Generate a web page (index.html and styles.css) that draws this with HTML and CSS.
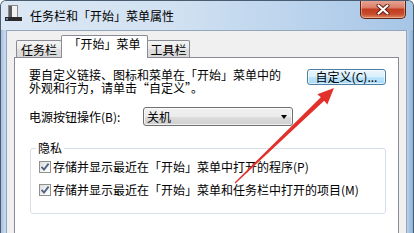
FILE: index.html
```html
<!DOCTYPE html>
<html lang="zh-CN">
<head>
<meta charset="utf-8">
<title>任务栏和「开始」菜单属性</title>
<link rel="stylesheet" href="styles.css">
</head>
<body>
<div class="window">
  <div class="titlebar">
    <svg class="appicon" width="18" height="18" viewBox="0 0 18 18">
      <rect x="3.5" y="0.5" width="9" height="12" fill="#f2f2f2" stroke="#8a8a8a"/>
      <rect x="4" y="1" width="3" height="11" fill="#5c5c5c"/>
      <rect x="0" y="12" width="17" height="4" fill="#2b2b2b"/>
      <rect x="1" y="13" width="2" height="2" fill="#4f87c8"/>
    </svg>
    <span class="title">任务栏和「开始」菜单属性</span>
    <div class="close">
      <svg width="14" height="11" viewBox="0 0 14 11">
        <path d="M2.5 1.5 L11.5 9.5 M11.5 1.5 L2.5 9.5" stroke="#5a1d12" stroke-width="4" stroke-linecap="round" fill="none"/>
        <path d="M2.5 1.5 L11.5 9.5 M11.5 1.5 L2.5 9.5" stroke="#ffffff" stroke-width="2.2" stroke-linecap="round" fill="none"/>
      </svg>
    </div>
  </div>
  <div class="client">
    <div class="tabs">
      <div class="tab t1">任务栏</div>
      <div class="tab active">「开始」菜单</div>
      <div class="tab t3">工具栏</div>
    </div>
    <div class="panel">
      <div class="intro">
        <p class="desc">要自定义链接、图标和菜单在「开始」菜单中的<br>外观和行为，请单击“自定义”。</p>
        <button class="btn">自定义(C)...</button>
      </div>
      <div class="power">
        <span class="label">电源按钮操作(B):</span>
        <div class="combo"><span class="value">关机</span><span class="drop"></span></div>
      </div>
      <fieldset class="group">
        <legend>隐私</legend>
        <label class="check"><span class="box"><svg width="10" height="10" viewBox="0 0 10 10"><path d="M1.5 4.8 L4 7.5 L8.6 1.6" stroke="#4e6286" stroke-width="1.8" fill="none"/></svg></span>存储并显示最近在「开始」菜单中打开的程序(P)</label>
        <label class="check"><span class="box"><svg width="10" height="10" viewBox="0 0 10 10"><path d="M1.5 4.8 L4 7.5 L8.6 1.6" stroke="#4e6286" stroke-width="1.8" fill="none"/></svg></span>存储并显示最近在「开始」菜单和任务栏中打开的项目(M)</label>
      </fieldset>
    </div>
  </div>
</div>
<svg class="annotation" width="414" height="233" viewBox="0 0 414 233">
  <path d="M334 88 L327.3 104.6 L324.2 100.8 L235.4 183.4 L234.6 182.6 L320.8 97.3 L317.4 94.2 Z" fill="#e2312b"/>
</svg>
</body>
</html>
```

FILE: styles.css
```css
* { box-sizing: border-box; margin: 0; padding: 0; }
html, body { width: 414px; height: 233px; overflow: hidden; }
body {
  position: relative;
  font-family: "Noto Sans CJK SC", "Noto Sans", sans-serif;
  font-size: 12px;
  line-height: 12px;
  color: #000;
  background: #fff;
}
.window {
  width: 414px;
  height: 233px;
  display: flex;
  flex-direction: column;
  border: 1px solid #4a5c70;
  border-bottom: 0;
  border-radius: 6px 6px 0 0;
  overflow: hidden;
  background: linear-gradient(to right, #a7c1dd 0, #c6d9ee 4px, #c2d7ed 50%, #a8c6e6 402px, #b7d1ec 406px, #92b1d2 100%);
}
.titlebar {
  height: 29px;
  flex: none;
  display: flex;
  align-items: center;
  padding-left: 4px;
  background: linear-gradient(to right, #dbe7f4 0%, #d2e2f2 40%, #b9d2ec 75%, #a6c5e6 100%);
}
.appicon { align-self: flex-start; margin-top: 4px; flex: none; }
.title { margin-left: 7px; font-size: 12px; line-height: 12px; padding-top: 1px; color: #000; }
.close {
  margin-left: auto;
  margin-right: 7px;
  align-self: flex-start;
  margin-top: -1px;
  width: 46px;
  height: 19px;
  border: 1px solid #5e241a;
  border-top: 0;
  border-radius: 0 0 5px 5px;
  background: linear-gradient(#eaa898 0%, #d97f68 42%, #c23d22 52%, #c74b2b 78%, #df8660 100%);
  display: flex;
  align-items: center;
  justify-content: center;
  padding-top: 1px;
  box-shadow: inset 0 0 0 1px rgba(255, 220, 200, 0.45);
}
.client {
  flex: 1;
  margin: 0 6px 0 5px;
  border: 1px solid #94a6ba;
  border-bottom: 0;
  background: #f0f0f0;
  padding: 4px 7px 0 7px;
  display: flex;
  flex-direction: column;
}
.tabs {
  display: flex;
  align-items: flex-end;
  height: 23px;
  padding-left: 2px;
  margin-bottom: -1px;
  position: relative;
  z-index: 1;
  flex: none;
}
.tab {
  height: 17px;
  margin-bottom: 1px;
  border: 1px solid #898c95;
  border-bottom: 0;
  border-radius: 2px 2px 0 0;
  background: linear-gradient(#f4f4f4 0%, #ebebeb 50%, #dedede 51%, #d8d8d8 100%);
  text-align: center;
  padding-top: 3px;
  line-height: 12px;
  white-space: nowrap;
}
.t1 { width: 46px; }
.t3 { width: 43px; margin-left: -1px; }
.tab.active {
  width: 87px;
  height: 23px;
  margin-bottom: 0;
  margin-left: -1px;
  background: #fff;
  padding-top: 2px;
  position: relative;
  z-index: 2;
}
.panel {
  flex: 1;
  background: #fff;
  border: 1px solid #898c95;
  border-bottom: 0;
  padding: 10px 12px 0 14px;
}
.intro { display: flex; justify-content: space-between; align-items: flex-start; }
.desc { line-height: 13px; white-space: nowrap; }
.btn {
  width: 79px;
  height: 16px;
  margin-top: 1px;
  border: 1px solid #4f7ea3;
  border-radius: 3px;
  background: linear-gradient(#eaf6fd 0%, #d9f0fc 50%, #bee6fd 51%, #a7d9f5 100%);
  font: inherit;
  line-height: 14px;
  color: #000;
  text-align: center;
  box-shadow: inset 0 0 0 1px rgba(255, 255, 255, 0.6);
}
.power { display: flex; align-items: center; margin-top: 13px; }
.label { width: 114px; flex: none; }
.combo {
  width: 150px;
  height: 19px;
  border: 1px solid #707070;
  border-radius: 3px;
  background: linear-gradient(#f2f2f2 0%, #ebebeb 50%, #dddddd 51%, #cfcfcf 100%);
  display: flex;
  align-items: center;
  justify-content: space-between;
  padding: 0 5px 0 3px;
  box-shadow: inset 0 0 0 1px rgba(255, 255, 255, 0.7);
}
.drop {
  width: 0;
  height: 0;
  border-left: 3.5px solid transparent;
  border-right: 3.5px solid transparent;
  border-top: 4px solid #000;
}
.group {
  margin: 16px 0 0 1px;
  border: 1px solid #d5dfe5;
  border-radius: 3px;
  padding: 7px 0 17px 8px;
  min-width: 0;
  display: flex;
  flex-direction: column;
  gap: 11px;
}
.group legend {
  padding: 0 2px;
  margin-left: -3px;
  line-height: 12px;
}
.check { display: flex; align-items: center; height: 12px; white-space: nowrap; }
.box {
  width: 12px;
  height: 12px;
  flex: none;
  margin-right: 2px;
  border: 1px solid #8e8f8f;
  background: linear-gradient(135deg, #dcdcdc 0%, #f4f4f4 60%, #ffffff 100%);
  display: flex;
  align-items: center;
  justify-content: center;
}
.annotation { position: absolute; left: 0; top: 0; pointer-events: none; }
```
